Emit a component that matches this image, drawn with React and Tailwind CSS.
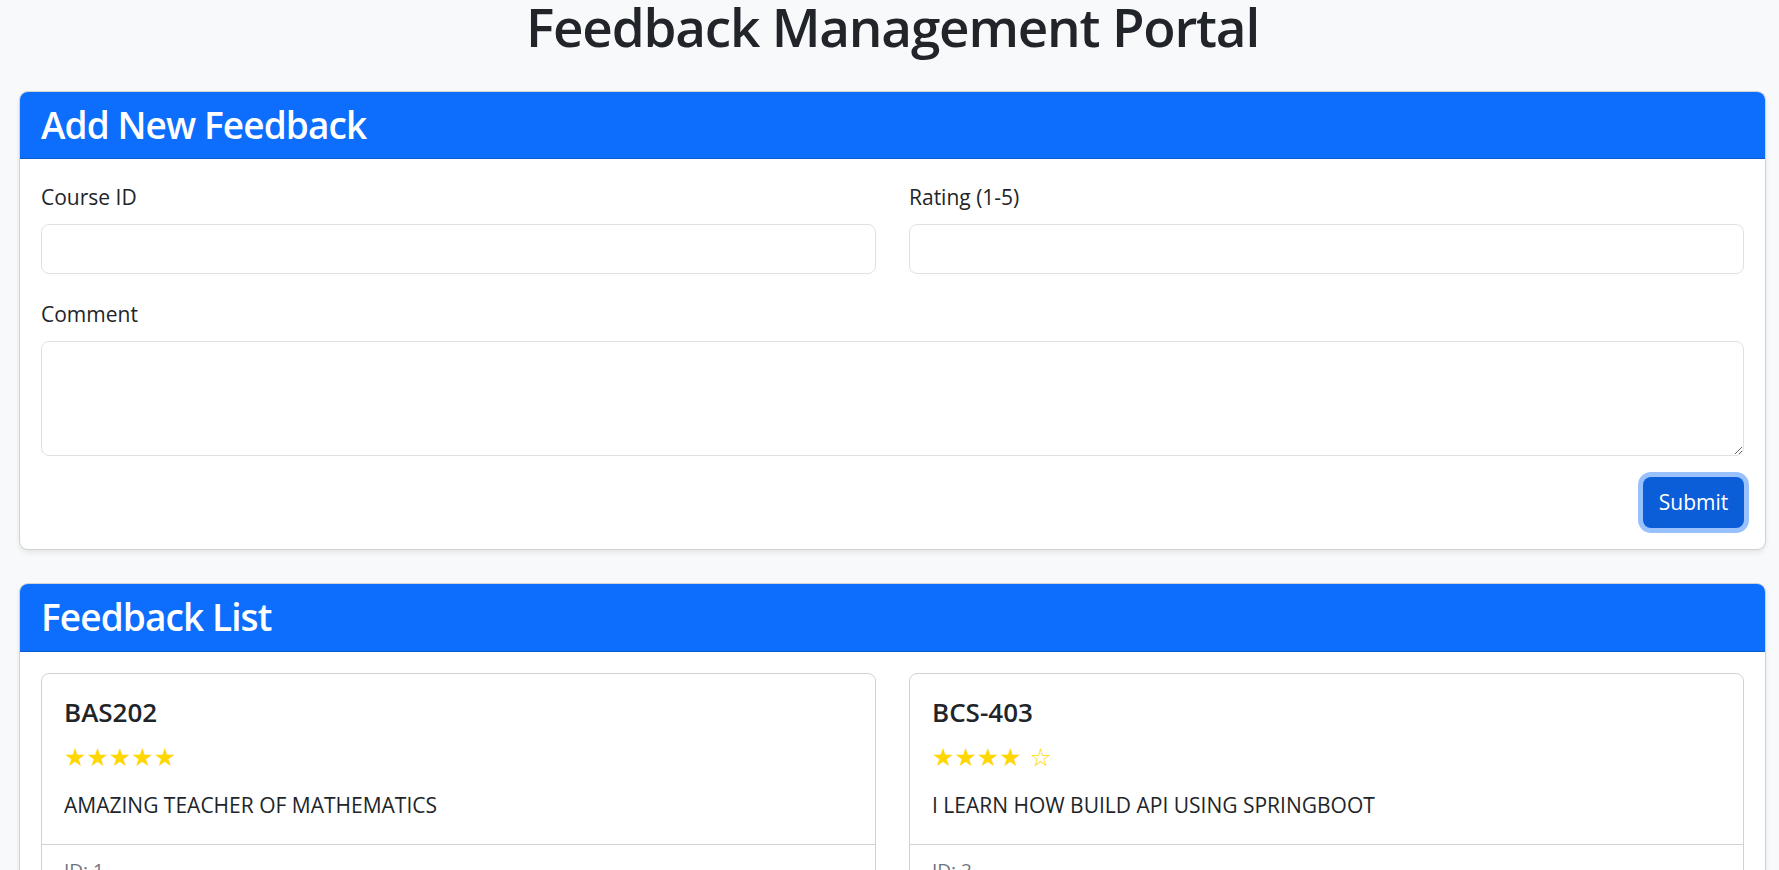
import { useState } from "react";

const feedbacks = [
  { id: 1, courseId: "BAS202", rating: "★★★★★", comment: "AMAZING TEACHER OF MATHEMATICS" },
  { id: 2, courseId: "BCS-403", rating: "★★★★ ☆", comment: "I LEARN HOW BUILD API USING SPRINGBOOT" },
];

const App = () => {
  const [courseId, setCourseId] = useState("");
  const [rating, setRating] = useState("");
  const [comment, setComment] = useState("");

  return (
    <div className="min-h-screen bg-[#f8f9fa] pl-[19px] pr-[13px] font-['Open_Sans','Noto_Sans',sans-serif] text-[#212529]">
      <h1 className="text-center text-[53px] leading-[54px] font-semibold tracking-[-1.2px] mb-[37px]">
        Feedback Management Portal
      </h1>

      {/* add form */}
      <div className="bg-white border border-black/[0.175] rounded-[9px] shadow-[0_3px_5px_rgba(0,0,0,0.075)] mb-[33px] overflow-hidden">
        <div className="bg-[#0d6efd] border-b border-black/[0.175] h-[67px] px-[21px] flex items-center">
          <h2 className="text-white text-[37px] leading-[1.2] font-semibold tracking-[-0.9px]">Add New Feedback</h2>
        </div>

        <div className="px-[21px] pt-[22px] pb-[21px]">
          <div className="grid grid-cols-2 gap-x-[33px] mb-[24px]">
            <div>
              <label className="block text-[21px] leading-[32px] mb-[11px]">Course ID</label>
              <input
                value={courseId}
                onChange={(e) => setCourseId(e.target.value)}
                className="w-full h-[50px] border border-[#dee2e6] rounded-[8px] px-[14px] text-[21px] outline-none"
              />
            </div>
            <div>
              <label className="block text-[21px] leading-[32px] mb-[11px]">Rating (1-5)</label>
              <input
                value={rating}
                onChange={(e) => setRating(e.target.value)}
                className="w-full h-[50px] border border-[#dee2e6] rounded-[8px] px-[14px] text-[21px] outline-none"
              />
            </div>
          </div>

          <label className="block text-[21px] leading-[32px] mb-[11px]">Comment</label>
          <textarea
            value={comment}
            onChange={(e) => setComment(e.target.value)}
            className="block w-full h-[115px] border border-[#dee2e6] rounded-[8px] px-[14px] py-[7px] text-[21px] outline-none"
          />

          <div className="flex justify-end mt-[21px]">
            <button className="w-[101px] h-[51px] bg-[#0b5ed7] text-white text-[21px] rounded-[8px] shadow-[0_0_0_5px_rgba(49,132,253,0.5)]">
              Submit
            </button>
          </div>
        </div>
      </div>

      {/* list */}
      <div className="bg-white border border-black/[0.175] rounded-[9px] shadow-[0_3px_5px_rgba(0,0,0,0.075)] overflow-hidden">
        <div className="bg-[#0d6efd] border-b border-black/[0.175] h-[68px] px-[21px] flex items-center">
          <h2 className="text-white text-[37px] leading-[1.2] font-semibold tracking-[-0.9px]">Feedback List</h2>
        </div>

        <div className="px-[21px] pt-[21px] pb-[22px] grid grid-cols-2 gap-x-[33px]">
          {feedbacks.map((fb) => (
            <div key={fb.id} className="border border-black/[0.175] rounded-[8px] overflow-hidden">
              <div className="p-[22px]">
                <h5 className="text-[26px] leading-[32px] font-semibold mb-[13px]">{fb.courseId}</h5>
                <p className="text-[25px] leading-[33px] text-[#ffd700] mb-[15px] font-['DejaVu_Sans',sans-serif]">
                  {fb.rating}
                </p>
                <p className="text-[21px] leading-[33px]">{fb.comment}</p>
              </div>
              <div className="border-t border-black/[0.175] px-[22px] py-[11px] text-[19px] text-[#6c757d]">
                ID: {fb.id}
              </div>
            </div>
          ))}
        </div>
      </div>
    </div>
  );
};

export default App;
